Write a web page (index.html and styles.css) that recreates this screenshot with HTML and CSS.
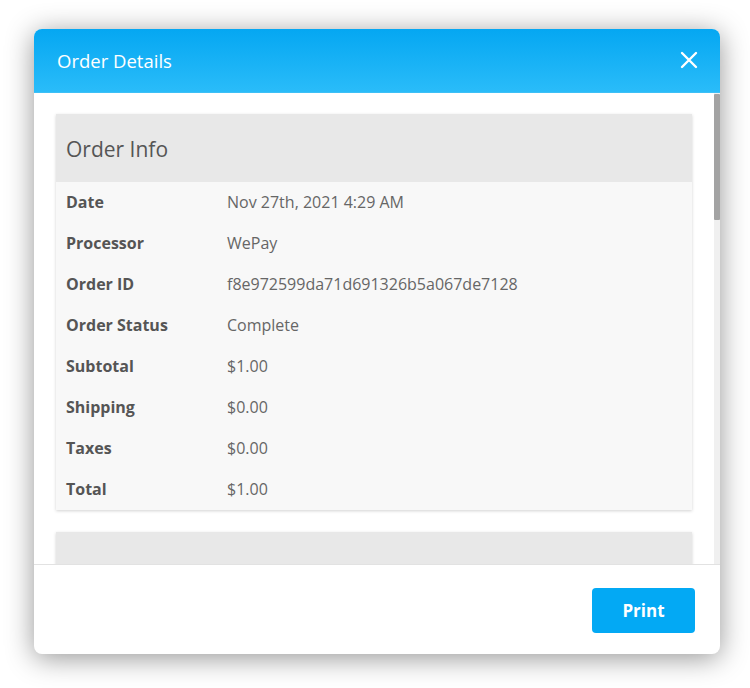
FILE: index.html
```html
<!DOCTYPE html>
<html>
<head>
<meta charset="utf-8">
<link rel="stylesheet" href="styles.css">
</head>
<body>
<div class="modal">
  <div class="modal-header">
    <span class="modal-title">Order Details</span>
    <svg class="close" width="18" height="18" viewBox="0 0 18 18"><path d="M2 2L16 16M16 2L2 16" stroke="#fff" stroke-width="2.4" stroke-linecap="round"/></svg>
  </div>
  <div class="modal-body">
    <div class="scroll">
      <div class="card">
        <div class="card-head">Order Info</div>
        <div class="rows">
          <div class="row"><span class="label">Date</span><span class="value">Nov 27th, 2021 4:29 AM</span></div>
          <div class="row"><span class="label">Processor</span><span class="value">WePay</span></div>
          <div class="row"><span class="label">Order ID</span><span class="value">f8e972599da71d691326b5a067de7128</span></div>
          <div class="row"><span class="label">Order Status</span><span class="value">Complete</span></div>
          <div class="row"><span class="label">Subtotal</span><span class="value">$1.00</span></div>
          <div class="row"><span class="label">Shipping</span><span class="value">$0.00</span></div>
          <div class="row"><span class="label">Taxes</span><span class="value">$0.00</span></div>
          <div class="row"><span class="label">Total</span><span class="value">$1.00</span></div>
        </div>
      </div>
      <div class="card">
        <div class="card-head">&nbsp;</div>
      </div>
    </div>
    <div class="scrollbar"><div class="thumb"></div></div>
  </div>
  <div class="modal-footer">
    <button class="btn">Print</button>
  </div>
</div>
</body>
</html>
```
FILE: styles.css
```css
* { box-sizing: border-box; }
html, body { margin: 0; padding: 0; background: #fff; }
body {
  font-family: "Open Sans", "Noto Sans", sans-serif;
  width: 750px;
  height: 688px;
  overflow: hidden;
  padding: 29px 0 0 34px;
}
.modal {
  width: 686px;
  height: 625px;
  background: #fff;
  border-radius: 8px;
  box-shadow: 0 4px 28px rgba(0,0,0,0.42);
  display: flex;
  flex-direction: column;
  overflow: hidden;
}
.modal-header {
  height: 64px;
  flex: none;
  background: linear-gradient(#05a7f2, #2abcf9);
  display: flex;
  align-items: center;
  justify-content: space-between;
  padding: 0 22px 0 23px;
  border-bottom: 1px solid #3ec0f6;
}
.modal-title {
  color: #fff;
  font-size: 18.5px;
  margin-top: 0;
}
.close { margin-top: -1px; }
.modal-body {
  height: 472px;
  flex: none;
  position: relative;
  overflow: hidden;
  border-bottom: 1px solid #e2e2e2;
}
.scroll {
  padding: 21px 28px 0 22px;
  display: flex;
  flex-direction: column;
  gap: 22px;
}
.card {
  background: #f8f8f8;
  box-shadow: 0 1px 3px rgba(0,0,0,0.18);
}
.card-head {
  height: 68px;
  background: #e8e8e8;
  color: #555;
  font-size: 21px;
  display: flex;
  align-items: center;
  padding-left: 10px;
  padding-top: 2px;
}
.row {
  height: 41px;
  display: flex;
  align-items: center;
  padding-left: 10px;
  padding-bottom: 2px;
  font-size: 16px;
}
.label {
  width: 161px;
  font-weight: 700;
  color: #555;
}
.value {
  color: #666;
}
.scrollbar {
  position: absolute;
  top: 0;
  right: 0;
  width: 6px;
  height: 100%;
  background: #f0f0f0;
}
.thumb {
  margin-top: 1px;
  height: 126px;
  background: #a3a3a3;
  border-radius: 1px;
}
.modal-footer {
  flex: 1;
  display: flex;
  justify-content: flex-end;
  align-items: flex-start;
  padding: 23px 25px 0 0;
}
.btn {
  width: 103px;
  height: 45px;
  border: none;
  border-radius: 4px;
  background: #03a9f4;
  color: #fff;
  font-family: "Open Sans", "Noto Sans", sans-serif;
  font-weight: 700;
  font-size: 17px;
  padding-top: 1px;
}
```
